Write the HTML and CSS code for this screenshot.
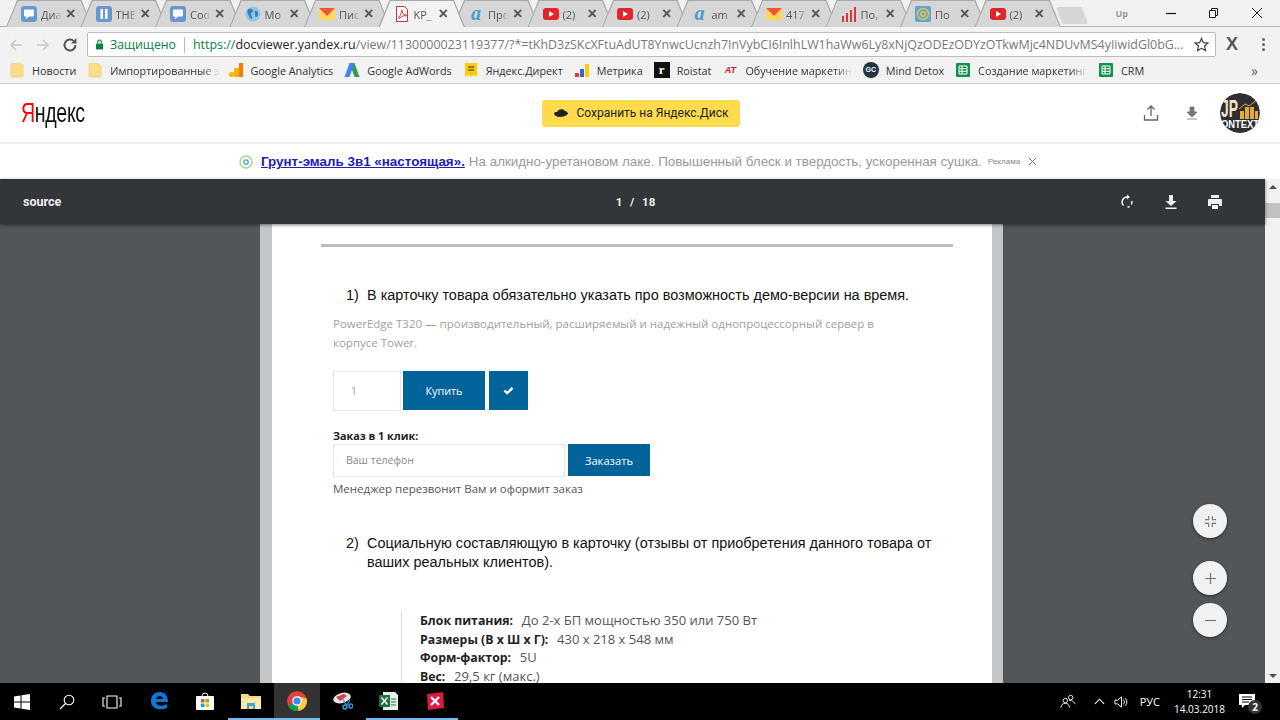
FILE: index.html
```html
<!DOCTYPE html>
<html lang="ru">
<head>
    <meta charset="UTF-8">
    <meta name="viewport" content="width=device-width, initial-scale=1.0">
    <title>KP_</title>
    <link rel="stylesheet" href="styles.css">
</head>
<body>
    <!-- shared tab and bookmark icons -->
    <svg class="defs" width="0" height="0">
        <symbol id="i-chat" viewBox="0 0 16 16"><rect width="16" height="16" rx="3" fill="#6a97cf"/><path d="M4 3.500h8a1 1 0 0 1 1 1v5a1 1 0 0 1-1 1H8l-3 2.500v-2.500H4a1 1 0 0 1-1-1v-5a1 1 0 0 1 1-1z" fill="#fff"/></symbol>
        <symbol id="i-pause" viewBox="0 0 16 16"><rect width="16" height="16" rx="3" fill="#6a97cf"/><path d="M4.500 3h2.500v10H4.500zM9 3h2.500v10H9z" fill="#fff"/></symbol>
        <symbol id="i-globe" viewBox="0 0 16 16"><circle cx="8" cy="8" r="7.500" fill="#8fc7e8"/><path d="M4 3c2-1 4 0 4 2s-2 1-2 3 2 2 1 5c-2 0-3-3-4-5S2 4 4 3zM10 5c2-1 3 1 3 3s-1 3-2 3-1-2-1-3-1-2 0-3z" fill="#3b7fb5"/></symbol>
        <symbol id="i-mail" viewBox="0 0 16 16"><path d="M0 3h16v11H0z" fill="#ffd85c"/><path d="M0 2h16L8 10z" fill="#f0553c"/></symbol>
        <symbol id="i-pdf" viewBox="0 0 16 16"><path d="M2.500.5h8l3 3v12h-11z" fill="#fff" stroke="#c8343a"/><path d="M8 4c-1 0 0 4-3 7-1 1 0 2 1 1 2-2 5-3 6-2 1 0 1-1 0-1-3 0-4-3-4-5z" fill="none" stroke="#c8343a"/></symbol>
        <symbol id="i-yt" viewBox="0 0 16 16"><rect y="2" width="16" height="12" rx="3" fill="#e3252a"/><path d="M6 5l5 3-5 3z" fill="#fff"/></symbol>
        <symbol id="i-bars" viewBox="0 0 16 16"><path d="M1 10h2v6H1zM5 7h2v9H5zM9 4h2v12H9zM13 1h2v15h-2z" fill="#d8383a"/></symbol>
        <symbol id="i-at" viewBox="0 0 16 16"><rect width="16" height="16" rx="2" fill="#5aa7d8"/><circle cx="8" cy="8" r="5.500" fill="none" stroke="#f0c04a" stroke-width="1.500"/><circle cx="8" cy="8" r="2.200" fill="none" stroke="#f0c04a" stroke-width="1.500"/></symbol>
        <symbol id="i-folder" viewBox="0 0 16 16"><path d="M2 1.500h9l3 2v11.500H2z" fill="#fbdd87" stroke="#eecb6c" stroke-width=".6"/></symbol>
        <symbol id="i-sheet" viewBox="0 0 16 16"><rect x="1" y="1" width="14" height="14" rx="1" fill="#11904f"/><path d="M4 4h8v8H4zM4 6.700h8M4 9.300h8M7 4v8" fill="none" stroke="#fff"/></symbol>
    </svg>

    <div class="tabstrip">
        <div class="tab"><svg class="tab-icon"><use href="#i-chat"/></svg><span class="tab-title">Диа</span><span class="tab-x">×</span></div>
        <div class="tab"><svg class="tab-icon"><use href="#i-pause"/></svg><span class="tab-title">THE</span><span class="tab-x">×</span></div>
        <div class="tab"><svg class="tab-icon"><use href="#i-chat"/></svg><span class="tab-title">Соо</span><span class="tab-x">×</span></div>
        <div class="tab"><svg class="tab-icon"><use href="#i-globe"/></svg><span class="tab-title">Мо</span><span class="tab-x">×</span></div>
        <div class="tab"><svg class="tab-icon"><use href="#i-mail"/></svg><span class="tab-title">Пис</span><span class="tab-x">×</span></div>
        <div class="tab tab-active"><svg class="tab-icon"><use href="#i-pdf"/></svg><span class="tab-title">KP_</span><span class="tab-x">×</span></div>
        <div class="tab"><span class="tab-icon tab-a">a</span><span class="tab-title">Про</span><span class="tab-x">×</span></div>
        <div class="tab"><svg class="tab-icon"><use href="#i-yt"/></svg><span class="tab-title">(2)</span><span class="tab-x">×</span></div>
        <div class="tab"><svg class="tab-icon"><use href="#i-yt"/></svg><span class="tab-title">(2)</span><span class="tab-x">×</span></div>
        <div class="tab"><span class="tab-icon tab-a">a</span><span class="tab-title">am</span><span class="tab-x">×</span></div>
        <div class="tab"><svg class="tab-icon"><use href="#i-mail"/></svg><span class="tab-title">417</span><span class="tab-x">×</span></div>
        <div class="tab"><svg class="tab-icon"><use href="#i-bars"/></svg><span class="tab-title">По,</span><span class="tab-x">×</span></div>
        <div class="tab"><svg class="tab-icon"><use href="#i-at"/></svg><span class="tab-title">По</span><span class="tab-x">×</span></div>
        <div class="tab"><svg class="tab-icon"><use href="#i-yt"/></svg><span class="tab-title">(2)</span><span class="tab-x">×</span></div>
        <div class="tab-new"></div>
        <div class="window-btns">
            <span class="win-up">Up</span>
            <svg class="win-btn win-min" viewBox="0 0 12 12"><path d="M1 6.500h10" stroke="#111" stroke-width="1.200"/></svg>
            <svg class="win-btn win-max" viewBox="0 0 12 12"><path d="M2.500 3.500h6v7h-6zM4.500 3.500v-2h6v7h-2" fill="none" stroke="#222"/></svg>
            <svg class="win-btn win-close" viewBox="0 0 12 12"><path d="M1 1l10 10M11 1L1 11" stroke="#222"/></svg>
        </div>
    </div>

    <div class="toolbar">
        <svg class="nav-icon" viewBox="0 0 16 16"><path d="M14 8H3M8 3L3 8l5 5" fill="none" stroke="#c8c8c8" stroke-width="1.600"/></svg>
        <svg class="nav-icon" viewBox="0 0 16 16"><path d="M2 8h11M8 3l5 5-5 5" fill="none" stroke="#c8c8c8" stroke-width="1.600"/></svg>
        <svg class="nav-icon" viewBox="0 0 16 16"><path d="M13.500 8a5.500 5.500 0 1 1-1.600-3.900" fill="none" stroke="#555" stroke-width="2"/><path d="M14.500 1v5.500H9z" fill="#555"/></svg>
        <div class="omnibox">
            <svg class="lock" viewBox="0 0 10 12"><path d="M1 5h8v6.500H1z" fill="#0b8043"/><path d="M3 5V3a2 2 0 0 1 4 0v2" fill="none" stroke="#0b8043" stroke-width="1.300"/></svg>
            <span class="secure">Защищено</span>
            <span class="url"><span class="url-https">https://</span><span class="url-host">docviewer.yandex.ru</span>/view/1130000023119377/?*=tKhD3zSKcXFtuAdUT8YnwcUcnzh7InVybCI6InlhLW1haWw6Ly8xNjQzODEzODYzOTkwMjc4NDUvMS4yIiwidGl0bG...</span>
            <svg class="star" viewBox="0 0 16 16"><path d="M8 1.500l2 4.500 4.800.5-3.600 3.200 1 4.800L8 12.100l-4.200 2.400 1-4.800L1.200 6.500 6 6z" fill="none" stroke="#444" stroke-width="1.300"/></svg>
        </div>
        <span class="ext-x">X</span>
        <span class="menu-dots"><i></i><i></i><i></i></span>
    </div>

    <div class="bookmarks">
        <span class="bm"><svg class="bm-icon"><use href="#i-folder"/></svg>Новости</span>
        <span class="bm bm-import"><svg class="bm-icon"><use href="#i-folder"/></svg><span class="bm-cut">Импортированные з</span></span>
        <span class="bm"><svg class="bm-icon" viewBox="0 0 16 16"><path d="M11 1h4v14h-4z" fill="#f57c00"/><path d="M6 6h5v9H6z" fill="#ffb300"/><circle cx="3.500" cy="12.500" r="2.500" fill="#ffb300"/></svg>Google Analytics</span>
        <span class="bm"><svg class="bm-icon" viewBox="0 0 16 16"><path d="M5.500 1h5L15.500 15h-5z" fill="#2e9e4f"/><path d="M5.500 1L.5 15h5l5-14z" fill="#4285f4"/></svg>Google AdWords</span>
        <span class="bm"><svg class="bm-icon" viewBox="0 0 16 16"><path d="M2 1h12v14l-3-2-3 2-3-2-3 2z" fill="#fc0"/><path d="M5 5h6M5 8h6" stroke="#222"/></svg>Яндекс.Директ</span>
        <span class="bm"><svg class="bm-icon" viewBox="0 0 16 16"><path d="M1 11h4v4H1z" fill="#e33"/><path d="M6 7h4v8H6z" fill="#36c"/><path d="M11 2h4v13h-4z" fill="#fc0"/></svg>Метрика</span>
        <span class="bm"><span class="bm-icon bm-roistat">r</span>Roistat</span>
        <span class="bm"><span class="bm-icon bm-at">AT</span><span class="bm-cut">Обучение маркетин</span></span>
        <span class="bm"><span class="bm-icon bm-gc">GC</span>Mind Detox</span>
        <span class="bm"><svg class="bm-icon"><use href="#i-sheet"/></svg><span class="bm-cut">Создание маркетинг</span></span>
        <span class="bm"><svg class="bm-icon"><use href="#i-sheet"/></svg>CRM</span>
        <span class="bm-more">»</span>
    </div>

    <header class="ya-header">
        <div class="ya-logo"><span class="ya-logo-red">Я</span>ндекс</div>
        <button class="save-btn">
            <svg class="save-icon" viewBox="0 0 16 12"><path d="M1 7c0-2 2-2 3-2 1-3 6-4 8-1 2 0 3 2 3 3-2 2-5 3-8 3S2 9 1 7z" fill="#222"/></svg>
            Сохранить на Яндекс.Диск
        </button>
        <div class="ya-actions">
            <svg class="ya-action" viewBox="0 0 18 18"><path d="M9 12V2M5.500 5.500L9 2l3.500 3.500M2.500 11v5h13v-5" fill="none" stroke="#666" stroke-width="1.300"/></svg>
            <svg class="ya-action" viewBox="0 0 18 18"><path d="M7 3h4v5h3l-5 5-5-5h3zM4 15h10" fill="#777" stroke="#777" stroke-width=".8"/></svg>
            <svg class="avatar" viewBox="0 0 40 40">
                <circle cx="20" cy="20" r="20" fill="#2f2f33"/>
                <text x="1" y="24" class="avatar-jp" textLength="17" lengthAdjust="spacingAndGlyphs">JP</text>
                <path d="M20 26h4v-8h-4zM25 26h4V14h-4zM30 26h4V14h-4zM35 26h3V18h-3z" fill="#e0ac3a"/>
                <path d="M19 16l6-5 4 2 8-6" fill="none" stroke="#e0ac3a"/>
                <text x="1" y="35" class="avatar-ctx" textLength="38" lengthAdjust="spacingAndGlyphs">ONTEXT</text>
            </svg>
        </div>
    </header>

    <div class="ad-row">
        <svg class="ad-icon" viewBox="0 0 14 14"><circle cx="7" cy="7" r="6" fill="none" stroke="#a6d785" stroke-width="1.400"/><circle cx="7" cy="7" r="2.200" fill="none" stroke="#3fa0d8" stroke-width="1.300"/></svg>
        <a class="ad-link" href="#">Грунт-эмаль 3в1 «настоящая».</a>
        <span class="ad-text">На алкидно-уретановом лаке. Повышенный блеск и твердость, ускоренная сушка.</span>
        <span class="ad-label">Реклама</span>
        <svg class="ad-close" viewBox="0 0 10 10"><path d="M1 1l8 8M9 1L1 9" stroke="#666"/></svg>
    </div>

    <div class="viewer">
        <div class="viewer-main">
            <div class="pdf-toolbar">
                <span class="pdf-name">source</span>
                <span class="pdf-pages">1&nbsp;&nbsp;/&nbsp;&nbsp;18</span>
                <div class="pdf-actions">
                    <svg class="pdf-action" viewBox="0 0 16 16"><path d="M8 3a5 5 0 0 0-3.500 8.500" fill="none" stroke="#f1f1f1" stroke-width="1.500"/><path d="M8 .5v5L11 3z" fill="#f1f1f1"/><path d="M12.800 7a5 5 0 0 1-.6 3.500M10.500 12.500a5 5 0 0 1-2 .5" fill="none" stroke="#f1f1f1" stroke-width="1.500"/></svg>
                    <svg class="pdf-action" viewBox="0 0 16 16"><path d="M6 1h4v6h3.500L8 12 2.500 7H6zM2.500 13.500h11V15h-11z" fill="#f1f1f1"/></svg>
                    <svg class="pdf-action" viewBox="0 0 16 16"><path d="M4 1h8v3H4zM2 5h12a1 1 0 0 1 1 1v6h-3v-2H4v2H1V6a1 1 0 0 1 1-1zM5 11h6v4H5z" fill="#f1f1f1"/></svg>
                </div>
            </div>
            <div class="pdf-area">
                <div class="page">
                    <div class="page-rule"></div>
                    <div class="li li-first"><span class="li-num">1)</span><span>В карточку товара обязательно указать про возможность демо-версии на время.</span></div>
                    <p class="shot-desc">PowerEdge T320 — производительный, расширяемый и надежный однопроцессорный сервер в корпусе Tower.</p>
                    <div class="buy-row">
                        <div class="qty">1</div>
                        <div class="blue-btn buy-btn">Купить</div>
                        <div class="blue-btn check-btn"><svg class="check" viewBox="0 0 12 10"><path d="M1.500 5l3 3 6-6" fill="none" stroke="#fff" stroke-width="2.600"/></svg></div>
                    </div>
                    <div class="oneclick-label">Заказ в 1 клик:</div>
                    <div class="oneclick-row">
                        <div class="phone">Ваш телефон</div>
                        <div class="blue-btn order-btn">Заказать</div>
                    </div>
                    <div class="manager">Менеджер перезвонит Вам и оформит заказ</div>
                    <div class="li li-second"><span class="li-num">2)</span><span>Социальную составляющую в карточку (отзывы от приобретения данного товара от ваших реальных клиентов).</span></div>
                    <div class="specs">
                        <div><b>Блок питания:</b>&nbsp; До 2-х БП мощностью 350 или 750 Вт</div>
                        <div><b>Размеры (В х Ш х Г):</b>&nbsp; 430 x 218 x 548 мм</div>
                        <div><b>Форм-фактор:</b>&nbsp; 5U</div>
                        <div><b>Вес:</b>&nbsp; 29,5 кг (макс.)</div>
                    </div>
                </div>
            </div>
            <div class="zoom-btn zoom-fit"><svg class="zoom-icon" viewBox="0 0 14 14"><path d="M5 1v4H1M9 1v4h4M5 13V9H1M9 13V9h4" fill="none" stroke="#777" stroke-width="1.200"/></svg></div>
            <div class="zoom-btn zoom-in"><svg class="zoom-icon" viewBox="0 0 14 14"><path d="M7 1v12M1 7h12" stroke="#777" stroke-width="1.300"/></svg></div>
            <div class="zoom-btn zoom-out"><svg class="zoom-icon" viewBox="0 0 14 14"><path d="M1 7h12" stroke="#777" stroke-width="1.300"/></svg></div>
        </div>
        <div class="scrollbar">
            <span class="sb-arrow sb-up"></span>
            <span class="sb-thumb"></span>
            <span class="sb-arrow sb-down"></span>
        </div>
    </div>

    <footer class="taskbar">
        <svg class="task task-start" viewBox="0 0 16 16"><path d="M0 2.500l6.500-1v6H0zM7.500 1.300L16 0v7.500H7.500zM0 8.500h6.500v6l-6.500-1zM7.500 8.500H16V16l-8.500-1.300z" fill="#fff"/></svg>
        <svg class="task task-search" viewBox="0 0 16 16"><circle cx="10" cy="6" r="4.800" fill="none" stroke="#fff" stroke-width="1.100"/><path d="M6.500 9.500L1 15" stroke="#fff" stroke-width="1.300"/></svg>
        <svg class="task task-view" viewBox="0 0 20 14"><path d="M5 1h10v12H5zM3 3H1v8h2M17 3h2v8h-2" fill="none" stroke="#fff" stroke-width="1.100"/></svg>
        <div class="app app-first"><svg class="app-icon" viewBox="0 0 20 20"><path d="M2 10C2 4 6 1 11 1c5 0 8 4 8 10H7c0 4 6 5 11 2v4c-7 3-16 1-16-7zm5-2h7c0-4-6-4-7 0z" fill="#0f78d4"/></svg></div>
        <div class="app"><svg class="app-icon" viewBox="0 0 20 20"><path d="M7 5a3 3 0 0 1 6 0" fill="none" stroke="#fff"/><rect x="1" y="5" width="18" height="14" rx="1" fill="#fff"/><path d="M6 8h3.500v3.500H6z" fill="#f25022"/><path d="M10.500 8H14v3.500h-3.500z" fill="#7fba00"/><path d="M6 12.500h3.500V16H6z" fill="#00a4ef"/><path d="M10.500 12.500H14V16h-3.500z" fill="#ffb900"/></svg></div>
        <div class="app app-on"><svg class="app-icon" viewBox="0 0 20 20"><path d="M0 3h7l2 2h11v13H0z" fill="#fbd87a"/><path d="M0 7h20v11H0z" fill="#ffe9a8"/><path d="M6 12h8v6H6z" fill="#3ca3dd"/><path d="M8 15h4v3H8z" fill="#fbd87a"/></svg></div>
        <div class="app app-on app-active"><svg class="app-icon" viewBox="0 0 20 20"><circle cx="10" cy="10" r="10" fill="#db4437"/><path d="M10 10L1.300 15a10 10 0 0 0 10.200 4.900z" fill="#0f9d58"/><path d="M10 10l1.500 9.900A10 10 0 0 0 19.600 7.500L10 5z" fill="#ffcd40"/><circle cx="10" cy="10" r="4.800" fill="#fff"/><circle cx="10" cy="10" r="3.600" fill="#4285f4"/></svg></div>
        <div class="app"><svg class="app-icon" viewBox="0 0 20 20"><ellipse cx="9" cy="7" rx="9" ry="5" fill="#e9e4e4" transform="rotate(-15 9 7)"/><path d="M3 6l8-3 3 2-7 5z" fill="#c9404a"/><circle cx="12" cy="16" r="2" fill="none" stroke="#3a9ad9" stroke-width="1.500"/><circle cx="18" cy="15" r="2" fill="none" stroke="#3a9ad9" stroke-width="1.500"/><path d="M10 8l3 6M17 9l-3 5" stroke="#3a9ad9" stroke-width="1.300"/></svg></div>
        <div class="app app-on"><svg class="app-icon" viewBox="0 0 20 20"><path d="M4 1h12l3 3v15H4z" fill="#e6f0e4"/><path d="M0 4h11v12H0z" fill="#1e7145"/><path d="M2.500 6.500l6 7M8.500 6.500l-6 7" stroke="#fff" stroke-width="1.400"/><path d="M12 8h5M12 11h5M12 14h5" stroke="#1e7145"/></svg></div>
        <div class="app app-on"><svg class="app-icon" viewBox="0 0 20 20"><path d="M2 3l16-2 1 16-16 2z" fill="#e0173f"/><path d="M6 6l8 8M14 6l-8 8" stroke="#fff" stroke-width="2.400"/></svg></div>
        <div class="tray">
            <svg class="tray-people" viewBox="0 0 18 16"><circle cx="6" cy="7" r="2.500" fill="none" stroke="#fff"/><path d="M1 15c0-3 2-5 5-5s4 2 5 5" fill="none" stroke="#fff"/><circle cx="12" cy="3.500" r="2.500" fill="none" stroke="#fff"/><path d="M10 7c3-1 6 1 7 4" fill="none" stroke="#fff"/></svg>
            <svg class="tray-caret" viewBox="0 0 12 7"><path d="M1 6l5-5 5 5" fill="none" stroke="#fff" stroke-width="1.100"/></svg>
            <svg class="tray-sound" viewBox="0 0 16 14"><path d="M1 5h3l4-3.500v11L4 9H1z" fill="none" stroke="#fff"/><path d="M10 4.500a3.500 3.500 0 0 1 0 5M12 3a6 6 0 0 1 0 8" fill="none" stroke="#fff"/></svg>
            <span class="tray-lang">РУС</span>
            <div class="clock"><span>12:31</span><span>14.03.2018</span></div>
            <div class="notif">
                <svg class="notif-icon" viewBox="0 0 16 15"><path d="M0 0h16v11H6l-3 3v-3H0z" fill="#fff"/><path d="M3 3h10M3 5.500h10M3 8h7" stroke="#000"/></svg>
                <span class="notif-count">2</span>
            </div>
        </div>
    </footer>
</body>
</html>
```

FILE: styles.css
```css
* {
    box-sizing: border-box;
}
html, body {
    margin: 0;
    height: 720px;
    overflow: hidden;
}
body {
    display: flex;
    flex-direction: column;
    width: 1280px;
    background: #fff;
    font-family: "Open Sans", "Liberation Sans", sans-serif;
    color: #222;
}
.defs {
    position: absolute;
}

/* browser tabs */
.tabstrip {
    display: flex;
    align-items: flex-end;
    height: 27px;
    padding-left: 6px;
    background: #f1f1f1;
    border-bottom: 1px solid #b4b4b4;
    flex-shrink: 0;
}
.tab {
    position: relative;
    display: flex;
    align-items: center;
    width: 74.500px;
    height: 26px;
    padding: 2px 0 0 15px;
}
.tab::before {
    content: "";
    position: absolute;
    top: 0;
    bottom: -1px;
    left: 0;
    right: -12px;
    background: #a9a9a9;
    clip-path: polygon(0 100%, 11px 0, calc(100% - 11px) 0, 100% 100%);
}
.tab::after {
    content: "";
    position: absolute;
    top: 1px;
    bottom: -1px;
    left: 1px;
    right: -11px;
    background: #d6d6d6;
    clip-path: polygon(0 100%, 11px 0, calc(100% - 11px) 0, 100% 100%);
}
.tab-active {
    z-index: 2;
}
.tab-active::after {
    background: #f2f2f2;
    bottom: -2px;
}
.tab > * {
    position: relative;
    z-index: 1;
}
.tab-icon {
    width: 16px;
    height: 16px;
    flex-shrink: 0;
}
.tab-a {
    color: #4a9bd0;
    font: italic bold 20px/14px "Liberation Serif", serif;
    text-align: center;
}
.tab-title {
    width: 21px;
    margin-left: 4px;
    white-space: nowrap;
    font-size: 11px;
    color: #555;
    -webkit-mask-image: linear-gradient(to right, #000 60%, transparent);
    mask-image: linear-gradient(to right, #000 60%, transparent);
}
.tab-x {
    margin-left: 4px;
    font: bold 16px/16px "Liberation Sans", sans-serif;
    color: #555;
}
.tab-new {
    width: 26px;
    height: 17px;
    margin: 0 0 2px 10px;
    background: #d6d6d6;
    transform: skewX(20deg);
    border-radius: 2px;
}
.window-btns {
    display: flex;
    align-items: center;
    height: 26px;
    margin-left: auto;
    padding-right: 17px;
}
.win-up {
    margin-right: 37px;
    font: bold 9px "Open Sans", sans-serif;
    color: #999;
}
.win-btn {
    width: 12px;
    height: 12px;
}
.win-max {
    margin-left: 30px;
}
.win-close {
    margin-left: 32px;
}

/* address bar */
.toolbar {
    display: flex;
    align-items: center;
    height: 30px;
    padding: 5px 0 0 8px;
    background: #f2f2f2;
    flex-shrink: 0;
}
.nav-icon {
    width: 16px;
    height: 16px;
    margin-right: 11px;
}
.omnibox {
    display: flex;
    align-items: center;
    width: 1129px;
    height: 25px;
    margin-left: -2px;
    padding: 0 6px 0 7px;
    background: #fff;
    border: 1px solid #bcbcbc;
    border-radius: 2px;
}
.lock {
    width: 9px;
    height: 11px;
    margin-right: 6px;
}
.secure {
    padding-right: 8px;
    margin-right: 8px;
    border-right: 1px solid #bbb;
    font-size: 12.300px;
    line-height: 16px;
    color: #0b8043;
}
.url {
    flex: 1;
    overflow: hidden;
    white-space: nowrap;
    font-size: 12.450px;
    color: #777;
}
.url-https {
    color: #0b8043;
}
.url-host {
    color: #222;
}
.star {
    width: 15px;
    height: 15px;
    margin-left: 4px;
}
.ext-x {
    margin-left: 10px;
    font: bold 18px "Liberation Sans", sans-serif;
    color: #555;
}
.menu-dots {
    display: flex;
    flex-direction: column;
    gap: 2px;
    margin-left: 24px;
}
.menu-dots i {
    width: 3px;
    height: 3px;
    background: #666;
    border-radius: 50%;
}

/* bookmarks */
.bookmarks {
    display: flex;
    align-items: center;
    gap: 11px;
    height: 27px;
    padding-left: 9px;
    background: #f2f2f2;
    border-bottom: 1px solid #cfcfcf;
    font-size: 10.800px;
    color: #333;
    white-space: nowrap;
    flex-shrink: 0;
}
.bm {
    display: flex;
    align-items: center;
    gap: 7px;
}
.bm-import {
    margin-right: -3px;
}
.bm-icon {
    display: block;
    width: 16px;
    height: 16px;
    flex-shrink: 0;
}
.bm-cut {
    -webkit-mask-image: linear-gradient(to right, #000 85%, transparent);
    mask-image: linear-gradient(to right, #000 85%, transparent);
}
.bm-roistat {
    background: #111;
    color: #fff;
    font: bold 13px/16px "Liberation Serif", serif;
    text-align: center;
}
.bm-at {
    color: #c22;
    font: italic bold 9px/16px "Liberation Sans", sans-serif;
    text-align: center;
}
.bm-gc {
    background: #234;
    color: #fff;
    border-radius: 50%;
    font: bold 7px/16px "Liberation Sans", sans-serif;
    text-align: center;
}
.bm-more {
    margin-left: auto;
    padding-right: 22px;
    font-size: 14px;
    color: #666;
}

/* yandex header */
.ya-header {
    display: grid;
    grid-template-columns: 1fr auto 1fr;
    align-items: center;
    height: 60px;
    padding: 0 20px 0 21px;
    background: #fff;
    border-bottom: 2px solid #eee;
    flex-shrink: 0;
}
.ya-logo {
    transform: scaleX(.7);
    transform-origin: left center;
    font: 28px "Liberation Sans", sans-serif;
    color: #111;
    letter-spacing: -0.5px;
}
.ya-logo-red {
    color: #f00;
}
.save-btn {
    display: flex;
    align-items: center;
    gap: 8px;
    width: 198px;
    height: 27px;
    padding: 0 0 0 11px;
    background: #ffdb4d;
    border: none;
    border-radius: 3px;
    font: 12px "Roboto", sans-serif;
    color: #222;
}
.save-icon {
    width: 16px;
    height: 12px;
}
.ya-actions {
    display: flex;
    align-items: center;
    justify-content: flex-end;
}
.ya-action {
    width: 18px;
    height: 18px;
    margin-right: 23px;
}
.ya-action + .ya-action {
    margin-right: 19px;
}
.avatar {
    width: 40px;
    height: 40px;
    clip-path: circle(50%);
}
.avatar-jp {
    font: bold 24px "Liberation Sans", sans-serif;
    fill: #f3e6c4;
}
.avatar-ctx {
    font: bold 10px "Liberation Sans", sans-serif;
    fill: #fff;
}

/* ad line */
.ad-row {
    display: flex;
    align-items: center;
    height: 35px;
    padding-left: 239px;
    background: #fff;
    font: 13.400px "Liberation Sans", sans-serif;
    white-space: nowrap;
    flex-shrink: 0;
}
.ad-icon {
    width: 14px;
    height: 14px;
    margin-right: 8px;
}
.ad-link {
    margin-right: 4px;
    font-weight: bold;
    color: #2020b8;
}
.ad-text {
    color: #999;
}
.ad-label {
    margin-left: 6px;
    font-size: 8px;
    color: #888;
}
.ad-close {
    width: 9px;
    height: 9px;
    margin-left: 8px;
}

/* pdf viewer */
.viewer {
    display: flex;
    flex: 1;
    min-height: 0;
}
.viewer-main {
    position: relative;
    display: flex;
    flex-direction: column;
    flex: 1;
    min-width: 0;
}
.pdf-toolbar {
    position: relative;
    z-index: 1;
    display: grid;
    grid-template-columns: 1fr auto 1fr;
    align-items: center;
    height: 45px;
    padding: 0 42px 0 23px;
    background: #323639;
    box-shadow: 0 1px 3px rgba(0, 0, 0, .5);
    color: #f1f1f1;
    flex-shrink: 0;
}
.pdf-name {
    font: bold 12.500px "Roboto", sans-serif;
}
.pdf-pages {
    padding-left: 25px;
    font: bold 11.500px "Roboto", sans-serif;
    word-spacing: 1px;
}
.pdf-actions {
    display: flex;
    justify-content: flex-end;
    gap: 28px;
}
.pdf-action {
    width: 16px;
    height: 16px;
}
.pdf-area {
    display: flex;
    justify-content: center;
    flex: 1;
    min-height: 0;
    padding-right: 2px;
    overflow: hidden;
    background: #525659;
}
.page {
    width: 743px;
    height: 600px;
    flex-shrink: 0;
    padding: 20px 39px 0 49px;
    background: #fff;
    border-left: 12px solid #c6c6c6;
    border-right: 11px solid #c6c6c6;
    font: 14.450px/19px "Liberation Sans", sans-serif;
    color: #111;
}
.page-rule {
    height: 3px;
    background: #bdbdbd;
}
.li {
    display: flex;
    margin-left: 25px;
}
.li-num {
    width: 21px;
    flex-shrink: 0;
}
.li-first {
    margin-top: 39px;
}
.li-second {
    margin-top: 36px;
    padding-right: 15px;
}
.shot-desc {
    width: 560px;
    margin: 9px 0 0 12px;
    font: 11.500px/19px "Open Sans", sans-serif;
    color: #a0a0a0;
}
.buy-row {
    display: flex;
    align-items: flex-start;
    margin: 19px 0 0 12px;
}
.qty {
    width: 68px;
    height: 40px;
    padding-left: 17px;
    border: 1px solid #e6e6e6;
    font: 10px/38px "Open Sans", sans-serif;
    color: #999;
}
.blue-btn {
    display: flex;
    align-items: center;
    justify-content: center;
    background: #02639b;
    color: #fff;
    font: 10.800px "Open Sans", sans-serif;
}
.buy-btn {
    width: 82px;
    height: 39px;
    margin-left: 2px;
}
.check-btn {
    width: 39px;
    height: 39px;
    margin-left: 4px;
}
.check {
    width: 11px;
    height: 9px;
}
.oneclick-label {
    margin: 17px 0 0 12px;
    font: bold 10.800px/15px "Open Sans", sans-serif;
    color: #222;
}
.oneclick-row {
    display: flex;
    align-items: flex-start;
    margin: 1px 0 0 12px;
}
.phone {
    width: 232px;
    height: 33px;
    padding-left: 12px;
    border: 1px solid #e6e6e6;
    font: 10.500px/31px "Open Sans", sans-serif;
    color: #888;
}
.order-btn {
    width: 82px;
    height: 32px;
    margin-left: 3px;
    font-size: 11.200px;
}
.manager {
    margin: 3px 0 0 12px;
    font: 11.500px/18px "Open Sans", sans-serif;
    color: #555;
}
.specs {
    margin: 39px 0 0 80px;
    padding: 0 0 0 18px;
    border-left: 1px solid #ddd;
    font: 13px/18.700px "Open Sans", sans-serif;
    color: #555;
}
.specs b {
    margin-right: 2px;
    font-size: 12.300px;
    line-height: 1;
    color: #222;
}
.zoom-btn {
    position: absolute;
    left: 1193px;
    display: flex;
    align-items: center;
    justify-content: center;
    width: 34px;
    height: 34px;
    background: #f1f1f1;
    border-radius: 50%;
    box-shadow: 0 1px 3px rgba(0, 0, 0, .5);
}
.zoom-fit {
    top: 325px;
}
.zoom-in {
    top: 382px;
}
.zoom-out {
    top: 424px;
}
.zoom-icon {
    width: 13px;
    height: 13px;
}
.scrollbar {
    display: flex;
    flex-direction: column;
    align-items: center;
    width: 15px;
    background: #f1f1f1;
    flex-shrink: 0;
}
.sb-arrow {
    width: 0;
    height: 0;
    border-left: 4px solid transparent;
    border-right: 4px solid transparent;
}
.sb-up {
    margin-top: 6px;
    border-bottom: 4px solid #505050;
}
.sb-down {
    margin-top: auto;
    margin-bottom: 5px;
    border-top: 4px solid #505050;
}
.sb-thumb {
    width: 15px;
    height: 15px;
    margin-top: 14px;
    background: #c1c1c1;
}

/* windows taskbar */
.taskbar {
    display: flex;
    align-items: center;
    height: 37px;
    padding-left: 14px;
    background: #000;
    color: #fff;
    flex-shrink: 0;
}
.task-start {
    width: 16px;
    height: 16px;
}
.task-search {
    width: 16px;
    height: 16px;
    margin-left: 29px;
}
.task-view {
    width: 20px;
    height: 14px;
    margin-left: 27px;
}
.app {
    display: flex;
    align-items: center;
    justify-content: center;
    width: 46px;
    height: 37px;
    border-bottom: 2px solid transparent;
}
.app-first {
    margin-left: 14px;
}
.app-on {
    border-bottom-color: #76b9ed;
}
.app-active {
    background-color: #333;
}
.app-icon {
    width: 20px;
    height: 20px;
}
.tray {
    display: flex;
    align-items: center;
    margin-left: auto;
    height: 37px;
}
.tray-people {
    width: 16px;
    height: 15px;
}
.tray-caret {
    width: 11px;
    height: 7px;
    margin-left: 18px;
}
.tray-sound {
    width: 15px;
    height: 14px;
    margin-left: 9px;
}
.tray-lang {
    margin-left: 11px;
    font-size: 11px;
}
.clock {
    display: flex;
    flex-direction: column;
    align-items: center;
    margin-left: 14px;
    font-size: 10px;
    line-height: 15px;
}
.notif {
    position: relative;
    width: 20px;
    height: 20px;
    margin: 0 21px 0 14px;
}
.notif-icon {
    width: 16px;
    height: 15px;
}
.notif-count {
    position: absolute;
    right: -3px;
    bottom: -2px;
    width: 14px;
    height: 14px;
    background: #333;
    border-radius: 50%;
    font: bold 10px/14px "Open Sans", sans-serif;
    text-align: center;
}
```
